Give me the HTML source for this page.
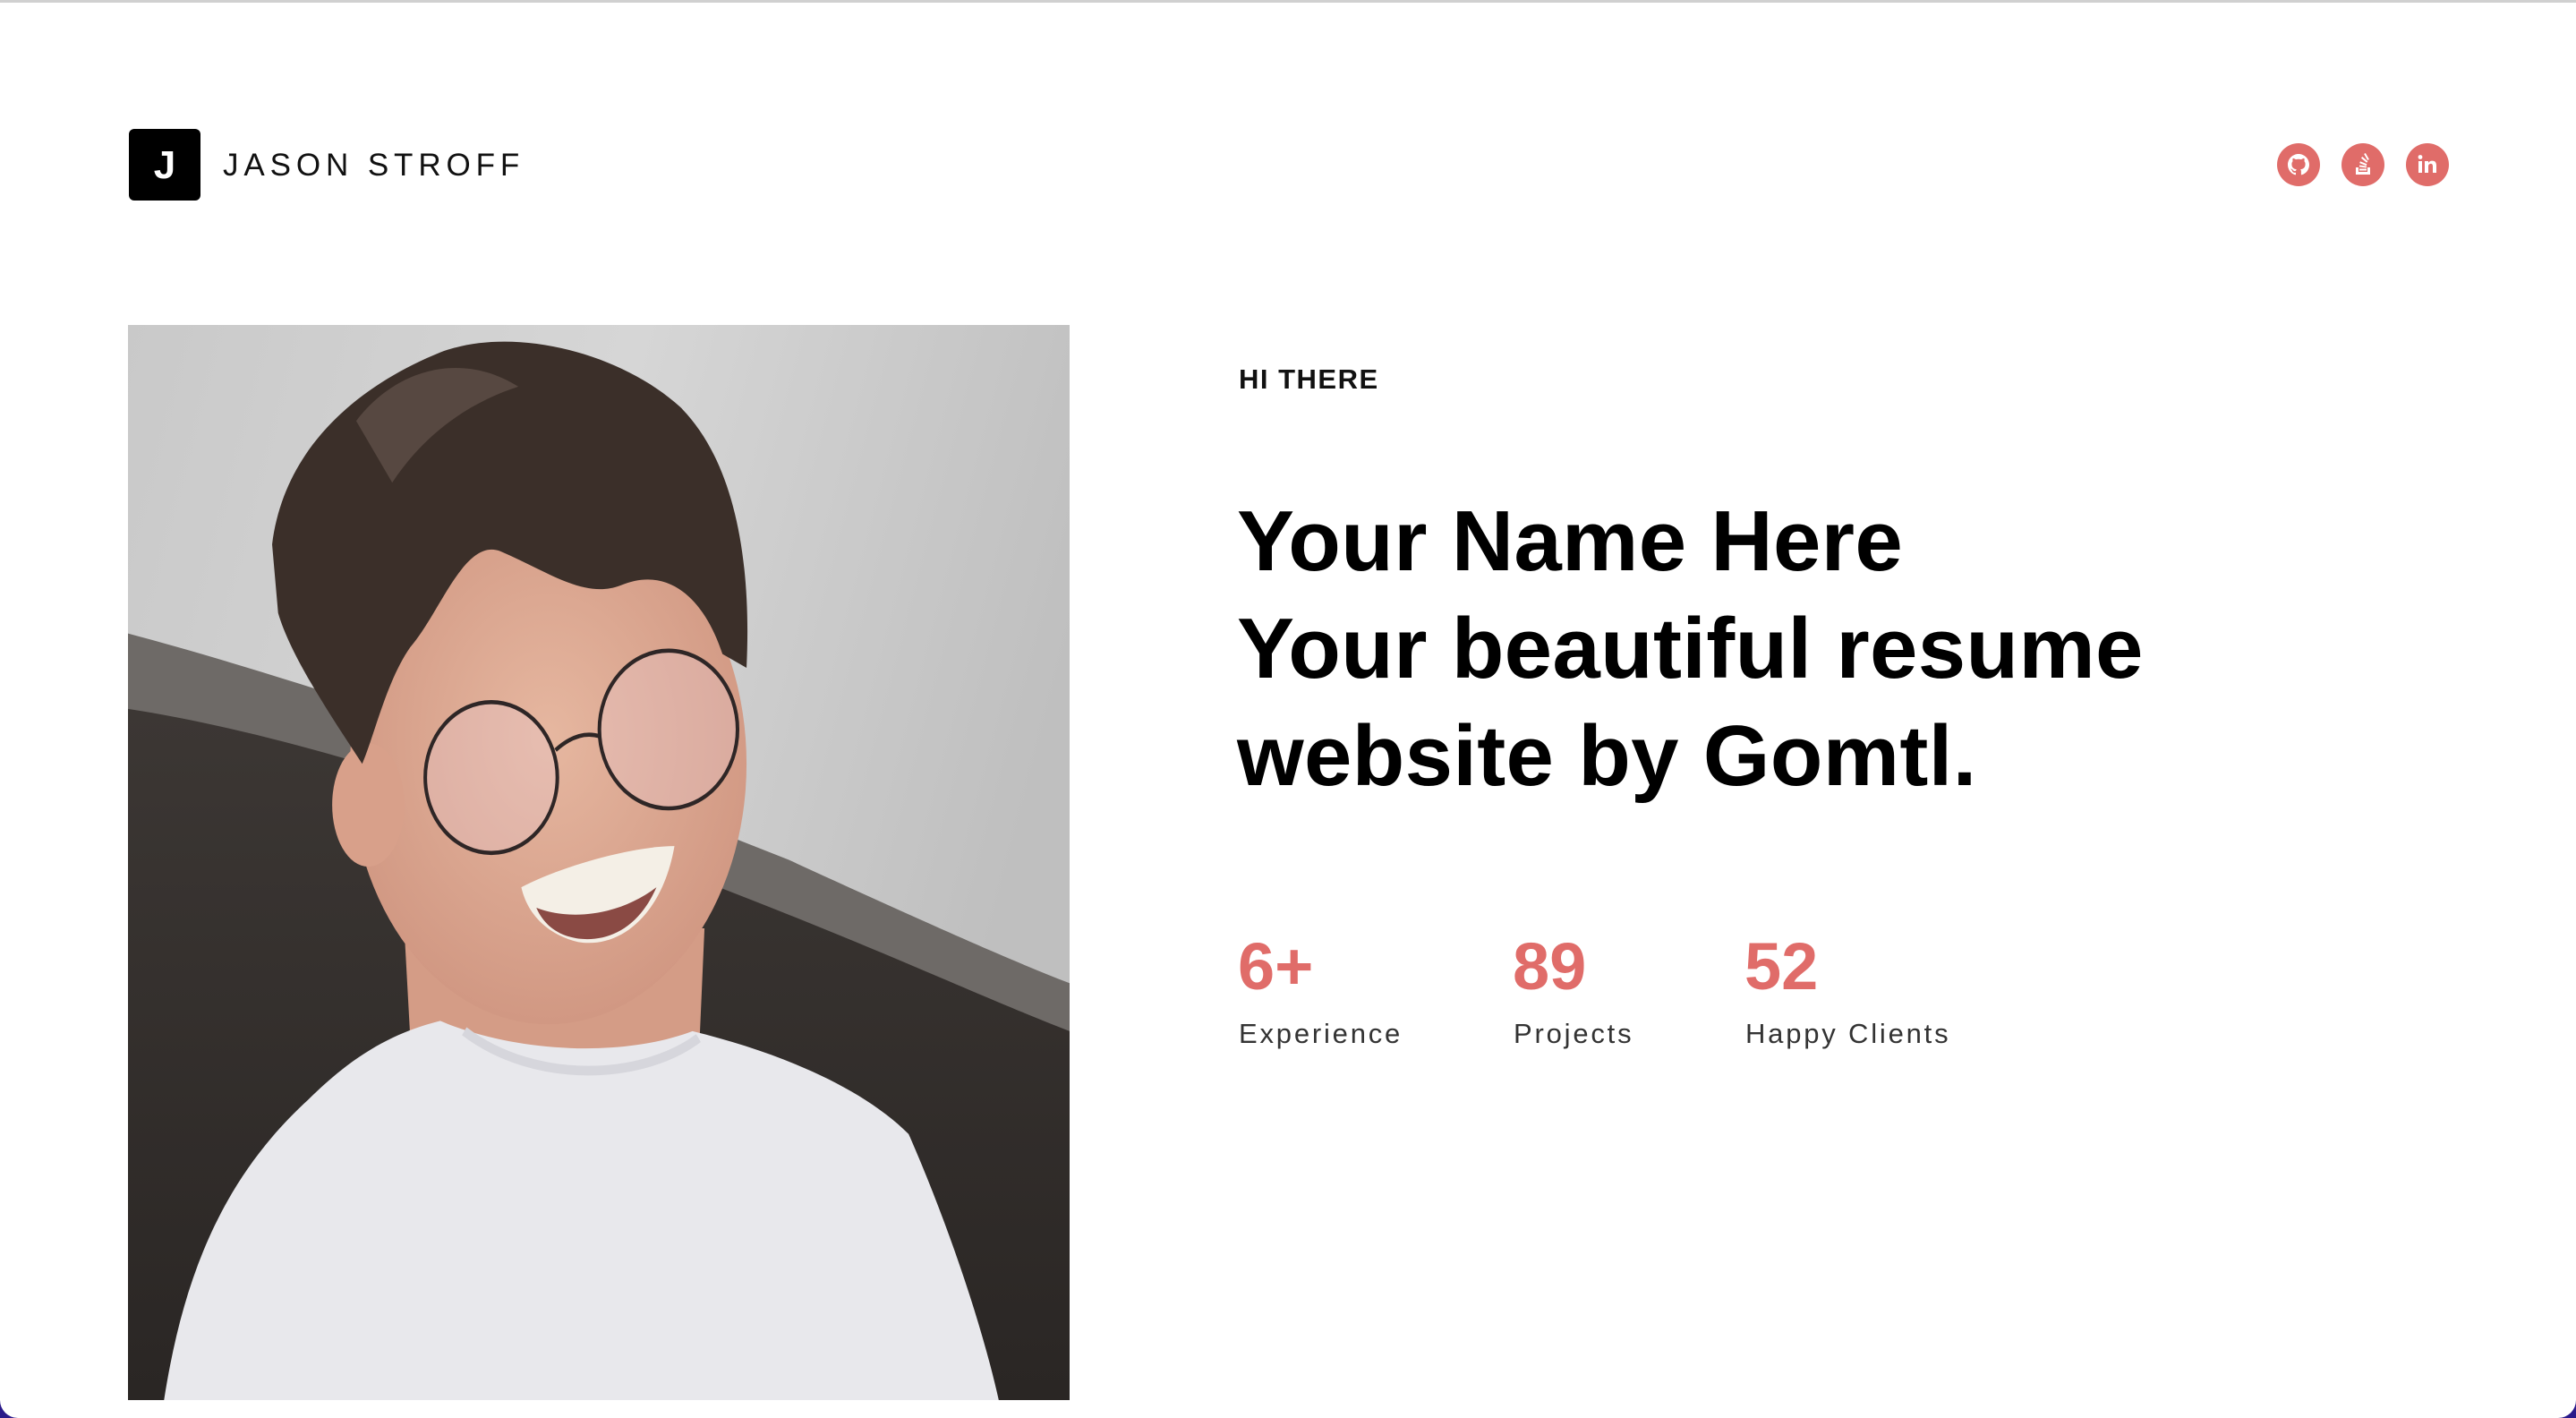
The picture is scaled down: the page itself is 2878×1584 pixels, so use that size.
<!DOCTYPE html>
<html><head><meta charset="utf-8"><style>
html,body{margin:0;padding:0;}
body{width:2878px;height:1584px;background:#2a1a8a;overflow:hidden;position:relative;font-family:"Liberation Sans",Arial,sans-serif;}
.page{position:absolute;left:0;top:0;width:2878px;height:1584px;background:#fff;border-radius:0 0 20px 20px;overflow:hidden;}
.topline{position:absolute;left:0;top:0;width:100%;height:3px;background:#d0d0d0;}
.logo{position:absolute;left:144px;top:144px;width:80px;height:80px;background:#000;border-radius:6px;color:#fff;font-weight:bold;font-size:44px;text-align:center;line-height:82px;}
.brand{position:absolute;left:249px;top:165px;font-size:35px;letter-spacing:5.9px;color:#111;line-height:40px;}
.ico{position:absolute;top:160px;width:48px;height:48px;border-radius:50%;background:#e06c69;}
.ico svg{position:absolute;left:0;top:0;width:48px;height:48px;}
.photo{position:absolute;left:143px;top:363px;width:1052px;height:1201px;}
.hi{position:absolute;left:1384px;top:406px;font-size:31px;font-weight:bold;letter-spacing:1.5px;color:#111;line-height:36px;}
h1{position:absolute;left:1382px;top:545px;margin:0;font-size:96px;line-height:120px;font-weight:bold;color:#000;letter-spacing:0.3px;}
.num{position:absolute;top:1040px;font-size:74px;font-weight:bold;color:#e06c69;line-height:80px;}
.lbl{position:absolute;top:1137px;font-size:31px;letter-spacing:2.8px;color:#333;line-height:36px;}
</style></head><body>
<div class="page">
<div class="topline"></div>
<div class="logo">J</div>
<div class="brand">JASON STROFF</div>

<div class="ico" style="left:2544px"><svg viewBox="0 0 48 48"><path fill="#fff" d="M24 12c-6.6 0-12 5.4-12 12 0 5.3 3.4 9.8 8.2 11.4.6.1.8-.3.8-.6v-2.1c-3.3.7-4-1.6-4-1.6-.5-1.4-1.3-1.800-1.300-1.8-1.1-.7.1-.7.1-.7 1.2.1 1.8 1.2 1.8 1.2 1.1 1.8 2.8 1.3 3.5 1 .1-.8.4-1.3.8-1.6-2.7-.3-5.5-1.3-5.5-5.900 0-1.3.5-2.4 1.2-3.200-.1-.3-.5-1.500.1-3.200 0 0 1-.3 3.3 1.200a11.5 11.5 0 0 1 6 0c2.3-1.5 3.3-1.2 3.3-1.2.7 1.7.2 2.9.1 3.2.8.8 1.2 1.900 1.2 3.200 0 4.600-2.800 5.600-5.500 5.900.4.4.8 1.100.8 2.200v3.300c0 .3.2.7.8.6C32.6 33.8 36 29.3 36 24c0-6.6-5.4-12-12-12z"/></svg></div>
<div class="ico" style="left:2616px"><svg viewBox="0 0 48 48"><g fill="#fff"><path d="M16 27h3v5h10v-5h3v8H16z"/><rect x="20" y="28.5" width="8" height="2"/><rect x="20" y="25" width="8" height="2" transform="rotate(8 24 26)"/><rect x="20.5" y="21.5" width="8" height="2" transform="rotate(22 24 22)"/><rect x="22" y="17.5" width="8" height="2" transform="rotate(40 26 18)"/><rect x="24" y="14" width="8" height="2" transform="rotate(60 28 15)"/></g></svg></div>
<div class="ico" style="left:2688px"><svg viewBox="0 0 48 48"><g fill="#fff"><rect x="14" y="20" width="4" height="13"/><circle cx="16" cy="15.5" r="2.4"/><path d="M21 20h4v2c.8-1.4 2.3-2.4 4.4-2.4 3.3 0 4.6 2 4.6 5.4V33h-4v-7.2c0-1.8-.6-2.9-2.2-2.9-1.7 0-2.8 1.1-2.8 3V33h-4z"/></g></svg></div>

<svg class="photo" viewBox="0 0 1568 1568" preserveAspectRatio="none">
<defs>
<linearGradient id="bg" x1="0" y1="0" x2="1" y2="0.3"><stop offset="0" stop-color="#c9c9c9"/><stop offset="0.5" stop-color="#d6d6d6"/><stop offset="1" stop-color="#bfbfbf"/></linearGradient>
<linearGradient id="dk" x1="0" y1="0" x2="0" y2="1"><stop offset="0" stop-color="#3c3734"/><stop offset="1" stop-color="#2a2624"/></linearGradient>
<radialGradient id="skin" cx="0.5" cy="0.45" r="0.6"><stop offset="0" stop-color="#e6b7a0"/><stop offset="1" stop-color="#cf9580"/></radialGradient>
</defs>
<rect width="1568" height="1568" fill="url(#bg)"/>
<path d="M0 450 C300 520 700 640 1100 780 C1300 860 1450 920 1568 960 L1568 1568 L0 1568Z" fill="#6e6a67"/>
<path d="M0 560 C300 600 700 720 1100 860 C1300 930 1450 990 1568 1030 L1568 1568 L0 1568Z" fill="url(#dk)"/>
<path d="M460 880 L960 880 L950 1080 L470 1040Z" fill="#d49c86"/>
<ellipse cx="700" cy="640" rx="330" ry="380" fill="url(#skin)"/>
<ellipse cx="400" cy="700" rx="60" ry="90" fill="#d8a08a"/>
<path d="M240 320 C260 180 380 90 520 40 C640 0 820 40 920 120 C1000 190 1040 320 1030 500 L990 480 C960 400 900 350 820 380 C760 400 700 360 620 330 C560 310 520 420 470 470 C430 520 410 600 390 640 C330 560 270 480 250 420Z" fill="#3b2f29"/>
<path d="M380 140 C450 60 560 40 650 90 C580 110 500 150 440 230Z" fill="#574841"/>
<circle cx="605" cy="660" r="110" fill="#e9c9cf" fill-opacity="0.35" stroke="#2e2626" stroke-width="6"/>
<circle cx="900" cy="590" r="115" fill="#e9c9cf" fill-opacity="0.35" stroke="#2e2626" stroke-width="6"/>
<path d="M712 620 Q750 590 786 600" stroke="#2e2626" stroke-width="6" fill="none"/>
<path d="M655 820 C720 790 840 760 910 760 C890 860 820 910 750 900 C700 890 665 860 655 820Z" fill="#f4efe6"/>
<path d="M680 850 C740 870 820 860 880 820 C850 880 800 900 750 895 C710 890 690 870 680 850Z" fill="#8a4a44"/>
<path d="M60 1568 C90 1400 150 1250 300 1130 C380 1060 450 1030 520 1015 C640 1060 820 1070 940 1030 C1080 1060 1220 1110 1300 1180 C1360 1300 1420 1450 1450 1568Z" fill="#e8e8ec"/>
<path d="M560 1030 C680 1110 860 1100 950 1040" stroke="#d6d6dc" stroke-width="14" fill="none"/>
</svg>

<div class="hi">HI THERE</div>
<h1>Your Name Here<br>Your beautiful resume<br>website by Gomtl.</h1>

<div class="num" style="left:1383px">6+</div>
<div class="num" style="left:1690px">89</div>
<div class="num" style="left:1949px">52</div>
<div class="lbl" style="left:1384px">Experience</div>
<div class="lbl" style="left:1691px">Projects</div>
<div class="lbl" style="left:1950px">Happy Clients</div>
</div>
</body></html>
